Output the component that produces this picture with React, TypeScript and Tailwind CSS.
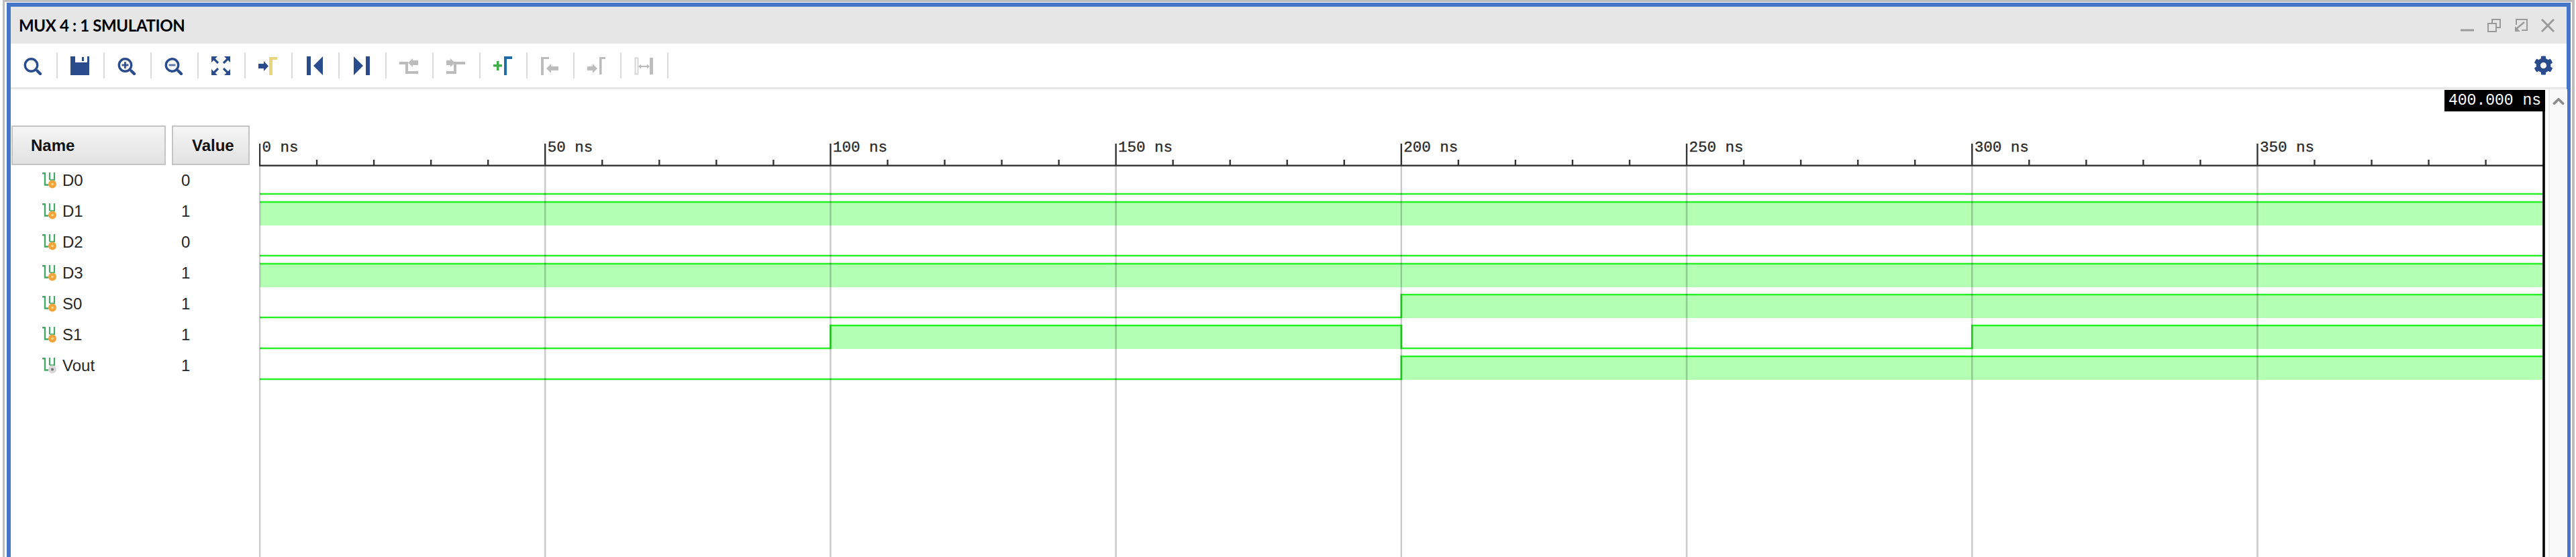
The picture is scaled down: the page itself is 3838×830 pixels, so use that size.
import { ChevronUp } from 'lucide-react';
import { FaCog } from 'react-icons/fa';

const NAVY = '#2b4c8c';
const GREY = '#bcbcbc';

// x position of a time value on the wave canvas
const nsToX = (ns: number) => 387 + ns * 8.504;

const signals = [
  { name: 'D0', value: '0', kind: 'in', edges: [[0, 0]] },
  { name: 'D1', value: '1', kind: 'in', edges: [[0, 1]] },
  { name: 'D2', value: '0', kind: 'in', edges: [[0, 0]] },
  { name: 'D3', value: '1', kind: 'in', edges: [[0, 1]] },
  { name: 'S0', value: '1', kind: 'in', edges: [[0, 0], [200, 1]] },
  { name: 'S1', value: '1', kind: 'in', edges: [[0, 0], [100, 1], [200, 0], [300, 1]] },
  { name: 'Vout', value: '1', kind: 'out', edges: [[0, 0], [200, 1]] },
];

const tools = ['search', 'save', 'zoomIn', 'zoomOut', 'fit', 'cursor', 'first', 'last', 'prevEdge', 'nextEdge', 'addMarker', 'prevMarker', 'nextMarker', 'swap'];

function MagnifierIcon({ mark }: { mark?: 'plus' | 'minus' }) {
  return (
    <svg width="28" height="28" viewBox="0 0 28 28" fill="none">
      <circle cx="11.5" cy="13" r="9.2" stroke={NAVY} strokeWidth="3.4" />
      <path d="M20.5 21.5L25 26" stroke={NAVY} strokeWidth="4.4" strokeLinecap="round" />
      {mark && <path d="M6.5 13H16.5" stroke={NAVY} strokeWidth="3" opacity={mark === 'minus' ? 0.75 : 0.9} />}
      {mark === 'plus' && <path d="M11.5 8V18" stroke={NAVY} strokeWidth="3" opacity="0.9" />}
    </svg>
  );
}

function ToolIcon({ name }: { name: string }) {
  if (name === 'search') return <MagnifierIcon />;
  if (name === 'zoomIn') return <MagnifierIcon mark="plus" />;
  if (name === 'zoomOut') return <MagnifierIcon mark="minus" />;

  return (
    <svg width="28" height="28" viewBox="0 0 28 28" fill="none">
      {name === 'save' && (
        <>
          <path d="M0 0H7V9H25V0H28V28H0Z" fill={NAVY} />
          <path d="M17 1H20V7H17Z" fill={NAVY} />
        </>
      )}
      {name === 'fit' && (
        <>
          <path d="M0 0H9L0 9Z M28 0H19L28 9Z M0 28H9L0 19Z M28 28H19L28 19Z" fill={NAVY} />
          <path d="M3 3L10 10M25 3L18 10M3 25L10 18M25 25L18 18" stroke={NAVY} strokeWidth="3.2" />
        </>
      )}
      {name === 'cursor' && (
        <>
          <path d="M0 11H8V7L15 14.5L8 22V18H0Z" fill={NAVY} />
          <path d="M16 1H28V5H21V28H16Z" fill="#e8d67c" />
        </>
      )}
      {name === 'first' && <path d="M2 0H8V28H2Z M12 14L26 0V28Z" fill={NAVY} />}
      {name === 'last' && <path d="M20 0H26V28H20Z M16 14L2 0V28Z" fill={NAVY} />}
      {name === 'prevEdge' && (
        <>
          <path d="M0 8H13V22H28V26H9V12H0Z" fill={GREY} />
          <path d="M13 9.5L20 3V6H28V13H20V16Z" fill={GREY} />
        </>
      )}
      {name === 'nextEdge' && (
        <>
          <path d="M0 22H11V8H28V12H15V26H0Z" fill={GREY} />
          <path d="M0 6H6V3L13 9.5L6 16V13H0Z" fill={GREY} />
        </>
      )}
      {name === 'addMarker' && (
        <>
          <path d="M0 12H5V7H8.5V12H13V15.5H8.5V21H5V15.5H0Z" fill="#3fae49" />
          <path d="M16 0H28V4H20V28H16Z" fill="#1f6ca6" />
        </>
      )}
      {name === 'prevMarker' && (
        <>
          <path d="M1 1H13V4H5V28H1Z" fill={GREY} />
          <path d="M9 18L16 11V15H27V21H16V25Z" fill={GREY} />
        </>
      )}
      {name === 'nextMarker' && (
        <>
          <path d="M18 1H27V4H21.5V27H18Z" fill={GREY} />
          <path d="M0 15H8V11L15 18L8 25V21H0Z" fill={GREY} />
        </>
      )}
      {name === 'swap' && (
        <>
          <rect x="1.5" y="2.5" width="4" height="24" stroke="#d6d6d6" strokeWidth="2" />
          <path d="M23 2H28V27H23Z" fill={GREY} />
          <path d="M8 15H21" stroke={GREY} strokeWidth="2" />
          <path d="M6 15L10 11.5V18.5Z M23 15L19 11.5V18.5Z" fill={GREY} />
        </>
      )}
    </svg>
  );
}

function SignalIcon({ kind }: { kind: string }) {
  return (
    <svg width="22" height="24" viewBox="0 0 22 24" fill="none" className="shrink-0">
      <path d="M0 1.2H4V18.5H9" stroke="#46a868" strokeWidth="2.4" />
      <path d="M18 0V12M11 0V11" stroke="#46a868" strokeWidth="2.2" />
      <path d="M11 11H18" stroke="#46a868" strokeWidth="1.6" />
      {kind === 'in' ? (
        <>
          <circle cx="15" cy="17.5" r="6" fill="#f0a43c" />
          <circle cx="15" cy="17.5" r="1.8" fill="#fbd78e" />
        </>
      ) : (
        <>
          <circle cx="15" cy="17.5" r="6" fill="#d8d8d8" />
          <circle cx="15" cy="17.5" r="2" fill="#6e6e6e" />
        </>
      )}
    </svg>
  );
}

function Wave({ edges, index }: { edges: number[][]; index: number }) {
  const low = 289 + index * 46;
  const high = low - 34;
  const end = 3788;
  let line = '';
  const fills: string[] = [];

  edges.forEach(([ns, level], i) => {
    const x1 = nsToX(ns);
    const x2 = i + 1 < edges.length ? nsToX(edges[i + 1][0]) : end;
    const y = level ? high : low;
    line += `${i === 0 ? 'M' : 'L'}${x1} ${y}L${x2} ${y}`;
    if (level) fills.push(`M${x1} ${high}H${x2}V${low + 1}H${x1}Z`);
  });

  return (
    <g>
      <path d={fills.join('')} fill="#b3ffb3" />
      <path d={line} stroke="#27f027" strokeWidth="2.6" fill="none" />
    </g>
  );
}

function WaveCanvas() {
  const minors = Array.from({ length: 40 }, (_, i) => i * 10);
  const majors = [0, 50, 100, 150, 200, 250, 300, 350];

  return (
    <svg width="3411" height="697" viewBox="386 133 3411 697" className="block">
      {signals.map((s, i) => (
        <Wave key={s.name} edges={s.edges} index={i} />
      ))}

      {majors.map((ns) => (
        <path key={ns} d={`M${nsToX(ns)} 248V830`} stroke="#000" strokeOpacity="0.2" strokeWidth="2.6" />
      ))}

      <path d="M386 246.7H3790" stroke="#3a3a3a" strokeWidth="2.6" />
      {minors.map((ns) => (
        <path key={ns} d={`M${nsToX(ns)} ${ns % 50 === 0 ? 214 : 238}V246`} stroke="#333" strokeWidth="2.4" />
      ))}
      {majors.map((ns) => (
        <text
          key={ns}
          x={nsToX(ns) + 3.5}
          y="226"
          fill="#2a2a2a"
          stroke="#2a2a2a"
          strokeWidth="0.35"
          className="font-['Liberation_Mono',monospace] text-[22.5px]"
        >
          {ns} ns
        </text>
      ))}

      <path d="M3790 166V830" stroke="#000" strokeWidth="3.6" />
    </svg>
  );
}

export default function App() {
  return (
    <div className="h-[830px] w-[3838px] overflow-hidden bg-white pl-[4px] pr-[2px] font-['Liberation_Sans',sans-serif]">
      <div className="h-full border-l-[3px] border-r-[4px] border-t-[3px] border-[#bdbdbd] pl-[3px] pr-[2px] pt-[1px]">
        <div className="flex h-full flex-col border-x-[6px] border-t-[6px] border-[#4676c8]">
          {/* title bar */}
          <div className="flex h-[55px] shrink-0 items-center justify-between bg-[#e6e6e6] pl-[12px] pr-[18px]">
            <span className="font-['Lato',sans-serif] text-[24px] font-bold tracking-[-0.37px] text-black">MUX 4 : 1 SMULATION</span>
            <div className="flex items-center gap-[20px] text-[#9a9a9a]">
              <svg width="20" height="20" viewBox="0 0 20 20" fill="none">
                <path d="M0 17H20" stroke="currentColor" strokeWidth="3" />
              </svg>
              <svg width="20" height="20" viewBox="0 0 20 20" fill="none" stroke="currentColor" strokeWidth="2">
                <path d="M7 6V1H19V13H13" />
                <rect x="1" y="7" width="12" height="12" />
              </svg>
              <svg width="20" height="20" viewBox="0 0 20 20" fill="none" stroke="currentColor" strokeWidth="2">
                <path d="M3 9V1H19V17H11" />
                <path d="M15 5L3 15" strokeWidth="2.4" />
                <path d="M1 19V11L9 19Z" fill="currentColor" stroke="none" />
              </svg>
              <svg width="20" height="20" viewBox="0 0 20 20" fill="none" stroke="currentColor" strokeWidth="3">
                <path d="M1 1L19 19M19 1L1 19" />
              </svg>
            </div>
          </div>

          {/* toolbar */}
          <div className="flex h-[68px] shrink-0 items-center justify-between border-b-[3px] border-[#e8e8e8] pr-[20px]">
            <div className="flex">
              {tools.map((tool) => (
                <div key={tool} className="flex h-[39px] w-[70px] items-center justify-center border-r-2 border-[#dcdcdc] pr-[2px]">
                  <ToolIcon name={tool} />
                </div>
              ))}
            </div>
            <FaCog size={29} color={NAVY} />
          </div>

          <div className="flex min-h-0 flex-1">
            {/* signal names and values */}
            <div className="w-[370px] shrink-0 pl-[1px] pt-[54px]">
              <div className="flex h-[59px] gap-[9px] text-[24px] font-bold text-[#111]">
                <div className="flex w-[230px] items-center border-2 border-[#c4c4c4] bg-gradient-to-b from-[#f5f5f5] to-[#e2e2e2] pl-[27px]">Name</div>
                <div className="flex w-[116px] items-center border-2 border-[#c4c4c4] bg-gradient-to-b from-[#f5f5f5] to-[#e2e2e2] pl-[28px]">Value</div>
              </div>
              {signals.map((s) => (
                <div key={s.name} className="flex h-[46px] items-center pl-[46px] text-[24px] text-[#262626]">
                  <SignalIcon kind={s.kind} />
                  <span className="ml-[8px] w-[177px]">{s.name}</span>
                  <span>{s.value}</span>
                </div>
              ))}
            </div>

            {/* waveform */}
            <div className="relative w-[3411px] shrink-0">
              <WaveCanvas />
              <div className="absolute left-[3256px] top-[1px] flex h-[32px] w-[150px] items-center justify-center bg-black font-['Liberation_Mono',monospace] text-[23px] text-white">
                400.000 ns
              </div>
            </div>

            {/* scrollbar */}
            <div className="flex flex-1 justify-center border-l-2 border-[#ececec] bg-[#f9f9f9] pt-[5px]">
              <ChevronUp size={26} strokeWidth={3.5} color="#8a8a8a" />
            </div>
          </div>
        </div>
      </div>
    </div>
  );
}
